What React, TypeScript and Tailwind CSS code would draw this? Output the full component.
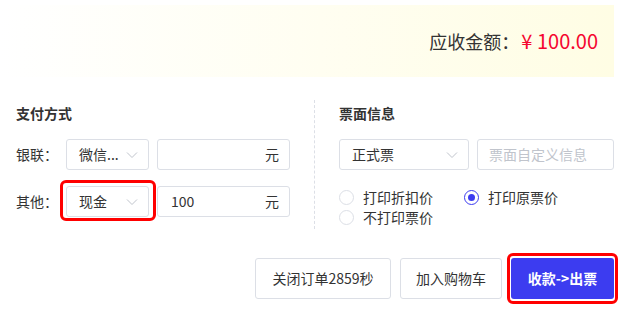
import React from "react";

const Chevron = () => (
  <svg width="12" height="8" viewBox="0 0 12 8" fill="none" className="shrink-0">
    <path d="M1 1.5 L6 6.5 L11 1.5" stroke="#c0c4cc" strokeWidth="1" />
  </svg>
);

const Select = ({ text, className }: { text: string; className: string }) => (
  <div
    className={`flex items-center justify-between h-[31px] border border-[#dcdfe6] rounded-[3px] bg-white pl-[12px] pr-[10px] text-[14px] text-[#333] ${className}`}
  >
    <span>{text}</span>
    <Chevron />
  </div>
);

const Radio = ({ checked, label }: { checked?: boolean; label: string }) => (
  <div className="flex items-center h-[20px]">
    {checked ? (
      <span className="w-[15px] h-[15px] rounded-full border border-[#3c3cf0] flex items-center justify-center">
        <span className="w-[7px] h-[7px] rounded-full bg-[#3c3cf0]" />
      </span>
    ) : (
      <span className="w-[15px] h-[15px] rounded-full border border-[#dcdfe6]" />
    )}
    <span className="ml-[9px] text-[14px] text-[#333]">{label}</span>
  </div>
);

export default function App() {
  return (
    <div className="w-[627px] h-[312px] bg-white text-[#333] font-['Noto_Sans_CJK_SC',sans-serif] overflow-hidden">
      <div className="mt-[5px] mr-[13px] h-[72px] bg-gradient-to-r from-[#ffffff] to-[#fffde4] flex items-center justify-end pr-[16px]">
        <span className="text-[#333] text-[18px]">应收金额：</span>
        <span className="text-[#f5062f] ml-[2px] text-[20px]">¥ 100.00</span>
      </div>

      <div className="flex mt-[23px]">
        <div className="w-[315px] pl-[16px] pb-[12px] border-r border-dashed border-[#dcdfe6]">
          <div className="h-[26px] leading-[26px] text-[14px] font-semibold">支付方式</div>
          <div className="flex items-center mt-[13px]">
            <span className="w-[50px] text-[14px]">银联：</span>
            <Select text="微信..." className="w-[83px]" />
            <div className="ml-[8px] w-[133px] h-[31px] border border-[#dcdfe6] rounded-[3px] flex items-center justify-end pr-[10px] text-[14px]">
              元
            </div>
          </div>
          <div className="flex items-center mt-[16px]">
            <span className="w-[50px] text-[14px]">其他：</span>
            <div className="relative">
              <Select text="现金" className="w-[83px]" />
              <span className="absolute left-[-6px] right-[-7px] top-[-6px] bottom-[-4px] border-[3px] border-[#f00] rounded-[6px]" />
            </div>
            <div className="ml-[8px] w-[133px] h-[31px] border border-[#dcdfe6] rounded-[3px] flex items-center justify-between pl-[13px] pr-[10px] text-[14px]">
              <span>100</span>
              <span>元</span>
            </div>
          </div>
        </div>

        <div className="pl-[24px]">
          <div className="h-[26px] leading-[26px] text-[14px] font-semibold">票面信息</div>
          <div className="flex items-center mt-[13px]">
            <Select text="正式票" className="w-[130px]" />
            <div className="ml-[8px] w-[137px] h-[31px] border border-[#dcdfe6] rounded-[3px] flex items-center pl-[11px] text-[14px] text-[#c0c4cc]">
              票面自定义信息
            </div>
          </div>
          <div className="mt-[17px] flex">
            <div className="w-[125px]">
              <Radio label="打印折扣价" />
            </div>
            <Radio checked label="打印原票价" />
          </div>
          <Radio label="不打印票价" />
        </div>
      </div>

      <div className="flex justify-end mt-[29px] mr-[13px] gap-[9px]">
        <button className="w-[136px] h-[41px] border border-[#dcdfe6] rounded-[3px] bg-white text-[14px] text-[#333]">
          关闭订单2859秒
        </button>
        <button className="w-[102px] h-[41px] border border-[#dcdfe6] rounded-[3px] bg-white text-[14px] text-[#333]">
          加入购物车
        </button>
        <div className="relative">
          <button className="w-[103px] h-[41px] rounded-[3px] bg-[#3c3cf0] text-[14px] text-white font-semibold">
            收款-&gt;出票
          </button>
          <span className="absolute left-[-4px] right-[-4px] top-[-5px] bottom-[-5px] border-[3px] border-[#f00] rounded-[6px]" />
        </div>
      </div>
    </div>
  );
}
